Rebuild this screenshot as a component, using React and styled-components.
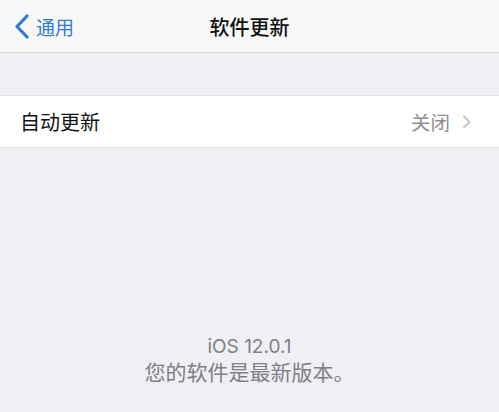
import React from 'react';
import styled, { createGlobalStyle } from 'styled-components';

const GlobalStyle = createGlobalStyle`
  html, body {
    margin: 0;
    padding: 0;
    background: #efeff4;
  }
  body {
    font-family: "Noto Sans CJK SC", "Noto Sans", sans-serif;
    -webkit-font-smoothing: antialiased;
  }
`;

const Screen = styled.div`
  height: 412px;
  display: flex;
  flex-direction: column;
  background: #efeff4;
  overflow: hidden;
`;

const NavBar = styled.header`
  height: 52px;
  flex-shrink: 0;
  display: grid;
  grid-template-columns: 1fr auto 1fr;
  align-items: center;
  background: #f7f7f8;
  border-bottom: 1px solid #d6d6da;
`;

const BackButton = styled.div`
  display: flex;
  align-items: center;
  gap: 7px;
  padding-left: 15px;
  color: #2f7ad2;
  font-size: 19px;
`;

const Title = styled.div`
  font-size: 20px;
  font-weight: 500;
  color: #111;
`;

const Group = styled.section`
  margin-top: 42px;
  background: #fff;
  border-top: 1px solid #e2e2e6;
  border-bottom: 1px solid #e2e2e6;
`;

const Row = styled.div`
  height: 51px;
  display: flex;
  align-items: center;
  justify-content: space-between;
  padding: 0 28px 0 20px;
`;

const Label = styled.span`
  font-size: 20px;
  color: #111;
`;

const Detail = styled.span`
  display: flex;
  align-items: center;
  gap: 12px;
  font-size: 19.5px;
  color: #8e8e93;
`;

const Spacer = styled.div`
  flex: 1;
`;

const Footer = styled.footer`
  padding-bottom: 29px;
  text-align: center;
  color: #808085;
  font-size: 21px;
  line-height: 24px;
`;

const Version = styled.div`
  font-family: "Inter", "Liberation Sans", sans-serif;
  font-size: 19px;
`;

const BackChevron = () => (
  <svg width="14" height="25" viewBox="0 0 14 25">
    <polyline points="12,2 2,12.5 12,23" fill="none" stroke="#2f7ad2" strokeWidth="3.2" strokeLinecap="round" strokeLinejoin="round" />
  </svg>
);

const RowChevron = () => (
  <svg width="9" height="14" viewBox="0 0 9 14">
    <polyline points="2,1.5 7.5,7 2,12.5" fill="none" stroke="#c4c4c9" strokeWidth="2" strokeLinecap="round" strokeLinejoin="round" />
  </svg>
);

const App = () => (
  <>
    <GlobalStyle />
    <Screen>
      <NavBar>
        <BackButton>
          <BackChevron />
          <span>通用</span>
        </BackButton>
        <Title>软件更新</Title>
        <div />
      </NavBar>
      <Group>
        <Row>
          <Label>自动更新</Label>
          <Detail>
            关闭
            <RowChevron />
          </Detail>
        </Row>
      </Group>
      <Spacer />
      <Footer>
        <Version>iOS 12.0.1</Version>
        <div>您的软件是最新版本。</div>
      </Footer>
    </Screen>
  </>
);

export default App;
